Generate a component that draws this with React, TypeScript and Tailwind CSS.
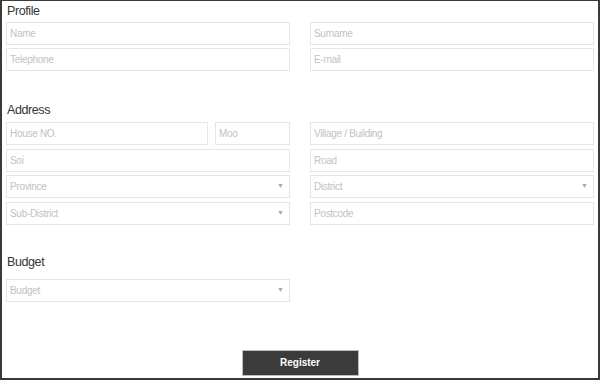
import React from 'react';

function Field({ placeholder, className = '' }: { placeholder: string; className?: string }) {
    return (
        <input
            placeholder={placeholder}
            className={`h-[23px] border border-[#e6e6e6] bg-white px-[3px] text-[10px] tracking-[-0.3px] text-[#555] outline-none placeholder:text-[#c2c2c2] ${className}`}
        />
    );
}

function Select({ placeholder }: { placeholder: string }) {
    return (
        <div className="flex h-[23px] items-center justify-between border border-[#e6e6e6] bg-white pl-[3px] pr-[5px]">
            <span className="text-[10px] tracking-[-0.3px] text-[#c2c2c2]">{placeholder}</span>
            <span className="text-[7px] text-[#aaa]">▼</span>
        </div>
    );
}

function Heading({ children, className = '' }: { children: React.ReactNode; className?: string }) {
    return (
        <h2 className={`h-[20px] pl-[1px] text-[12.5px] leading-[20px] tracking-[-0.4px] text-[#333] ${className}`}>
            {children}
        </h2>
    );
}

export default function App() {
    return (
        <div
            className="flex h-[380px] w-[600px] flex-col border-t border-r-2 border-b-2 border-l-2 border-[#3a3a3a] bg-white px-[4px]"
            style={{ fontFamily: '"Liberation Sans", Arial, sans-serif' }}
        >
            {/* Profile */}
            <Heading>Profile</Heading>
            <div className="mt-[1px] grid grid-cols-2 gap-x-[20px] gap-y-[3px]">
                <Field placeholder="Name" />
                <Field placeholder="Surname" />
                <Field placeholder="Telephone" />
                <Field placeholder="E-mail" />
            </div>

            {/* Address */}
            <Heading className="mt-[29px]">Address</Heading>
            <div className="mt-[2px] grid grid-cols-2 gap-x-[20px] gap-y-[3.5px]">
                <div className="flex gap-[7px]">
                    <Field placeholder="House NO." className="w-[202px]" />
                    <Field placeholder="Moo" className="min-w-0 flex-1" />
                </div>
                <Field placeholder="Village / Building" />
                <Field placeholder="Soi" />
                <Field placeholder="Road" />
                <Select placeholder="Province" />
                <Select placeholder="District" />
                <Select placeholder="Sub-District" />
                <Field placeholder="Postcode" />
            </div>

            {/* Budget */}
            <Heading className="mt-[27px]">Budget</Heading>
            <div className="mt-[7px] grid grid-cols-2 gap-x-[20px]">
                <Select placeholder="Budget" />
            </div>

            <div className="mt-[48px] flex justify-center">
                <button className="h-[26px] w-[117px] border border-[#bdbdbd] bg-[#3b3b3b] text-[10px] font-bold text-white">
                    Register
                </button>
            </div>
        </div>
    );
}
